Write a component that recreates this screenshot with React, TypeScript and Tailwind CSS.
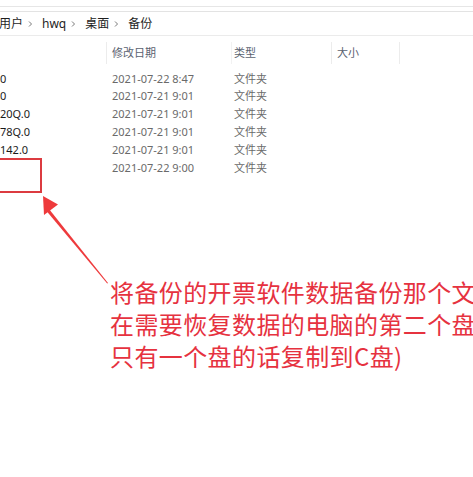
import React from "react";

const rows = [
  { name: "0", date: "2021-07-22 8:47" },
  { name: "0", date: "2021-07-21 9:01" },
  { name: "20Q.0", date: "2021-07-21 9:01" },
  { name: "78Q.0", date: "2021-07-21 9:01" },
  { name: "142.0", date: "2021-07-21 9:01" },
  { name: "", date: "2021-07-22 9:00" },
];

const crumbs = ["用户", "hwq", "桌面", "备份"];

function Chevron() {
  return (
    <svg width="8" height="12" viewBox="0 0 8 12" className="ml-[3px] mr-[8px]">
      <path d="M3 3.5 L5.5 6 L3 8.5" fill="none" stroke="#7a7a7a" strokeWidth="1" />
    </svg>
  );
}

export default function App() {
  return (
    <div
      className="relative h-[477px] w-[473px] overflow-hidden bg-white"
      style={{ fontFamily: '"Noto Sans", "Noto Sans CJK SC", sans-serif' }}
    >
      {/* toolbar strip */}
      <div className="h-[6px]" />
      <div className="h-[5px] border-t border-[#e6e6e6]" />
      <div className="border-t border-[#e3e3e3]" />

      {/* address bar */}
      <div className="flex h-[24px] items-center border-b border-[#ebebeb] text-[12px] text-[#1e1e1e]">
        {crumbs.map((c, i) => (
          <React.Fragment key={i}>
            {i > 0 && <Chevron />}
            <span className={i === 0 ? "-ml-[1px]" : ""}>{c}</span>
          </React.Fragment>
        ))}
      </div>

      {/* column headers */}
      <div className="mt-[6px] flex h-[22px] items-center text-[11px] text-[#5a6270]">
        <div className="h-full w-[107px] border-r border-[#ececec]" />
        <div className="flex h-full w-[125px] items-center border-r border-[#f2f2f2] pl-[5px]">修改日期</div>
        <div className="flex h-full w-[100px] items-center border-r border-[#ececec] pl-[2px]">类型</div>
        <div className="flex h-full w-[68px] items-center border-r border-[#ececec] pl-[5px]">大小</div>
      </div>

      {/* rows */}
      <div className="mt-[6px] flex flex-col">
        {rows.map((r, i) => (
          <div key={i} className="flex h-[17.8px] items-center text-[11px]">
            <div className="w-[112px] text-[#1a1a1a]">{r.name}</div>
            <div className="w-[122px] text-[#6a6a6a]">{r.date}</div>
            <div className="text-[#6a6a6a]">文件夹</div>
          </div>
        ))}
      </div>

      {/* red highlight box */}
      <div className="absolute left-[-4px] top-[158px] h-[35px] w-[46px] border-2 border-[#dc3b40]" />

      {/* arrow */}
      <svg className="absolute left-0 top-0" width="473" height="477" viewBox="0 0 473 477">
        <path d="M49 209 L108 283 L107.2 283.6 L46.5 211 Z" fill="#ee3a3c" />
        <polygon points="43,196 58,204.5 44,215" fill="#ee3a3c" />
      </svg>

      {/* annotation */}
      <div
        className="absolute left-[110px] top-[276px] whitespace-nowrap text-[24px] leading-[32px] tracking-[0.4px] text-[#e6323f]"
        style={{ fontFamily: '"Noto Sans CJK SC", sans-serif' }}
      >
        <div>将备份的开票软件数据备份那个文件夹</div>
        <div>在需要恢复数据的电脑的第二个盘</div>
        <div>只有一个盘的话复制到C盘)</div>
      </div>
    </div>
  );
}
